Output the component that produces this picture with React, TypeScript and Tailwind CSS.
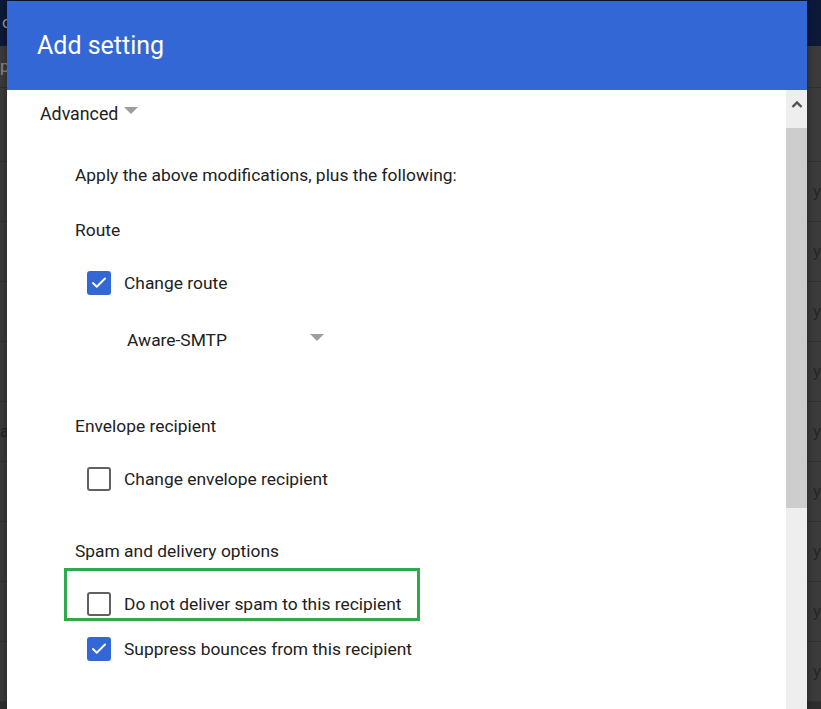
import { Check } from "lucide-react";

const font = { fontFamily: "Roboto, 'Noto Sans', Arial, sans-serif" };

function Caret({ className = "" }: { className?: string }) {
  return (
    <svg width="14" height="7" viewBox="0 0 14 7" className={className}>
      <path d="M0 0 L14 0 L7 7 Z" fill="#9e9e9e" />
    </svg>
  );
}

function Checkbox({ checked }: { checked?: boolean }) {
  if (checked) {
    return (
      <span className="flex h-[24px] w-[24px] shrink-0 items-center justify-center rounded-[3px] bg-[#3367d6]">
        <Check size={18} strokeWidth={2.5} color="#fff" />
      </span>
    );
  }
  return <span className="h-[24px] w-[24px] shrink-0 rounded-[3px] border-2 border-[#616161]" />;
}

function Option({ checked, label, className = "" }: { checked?: boolean; label: string; className?: string }) {
  return (
    <div className={`flex items-center gap-[13px] ${className}`}>
      <Checkbox checked={checked} />
      <span className="text-[17.4px] leading-[24px] text-[#212121]">{label}</span>
    </div>
  );
}

const rows = [0, 1, 2, 3, 4, 5, 6, 7, 8];

export default function App() {
  return (
    <div className="relative h-[709px] w-[821px] overflow-hidden bg-[#3b3b3b]" style={font}>
      {/* page behind the dialog */}
      <div className="flex h-[46px] items-center bg-[#0c1938] pl-[2px] text-[17px] text-[#9aa0aa]">o</div>
      <div className="flex h-[42px] items-center border-b border-[#2f2f2f] text-[17px] text-[#8a8a8a]">pa</div>
      <div className="h-[74px] border-b border-[#313131]" />
      <div className="flex flex-col">
        {rows.map((i) => (
          <div
            key={i}
            className="flex h-[60px] items-center justify-between border-b border-[#313131] text-[17px] text-[#262626]"
          >
            <span>{i === 4 ? "a" : ""}</span>
            <span className="pr-[0px]">y</span>
          </div>
        ))}
        <div className="h-[20px] bg-[#2e2e2e]" />
      </div>

      {/* dialog */}
      <div className="absolute left-[7px] top-[1px] bottom-0 flex w-[800px] flex-col bg-white shadow-[0_0_8px_rgba(0,0,0,0.4)]">
        <div className="flex h-[89px] shrink-0 items-center bg-[#3367d6] pl-[30px]">
          <h1 className="text-[25px] font-normal text-white">Add setting</h1>
        </div>
        <div className="flex flex-1 overflow-hidden">
          <div className="flex-1 pt-[12px]">
            <div className="flex items-center gap-[6px] pl-[33px]">
              <span className="text-[17.8px] leading-[24px] text-[#212121]">Advanced</span>
              <Caret className="-mt-[8px]" />
            </div>

            <div className="pl-[68px]">
              <p className="mt-[37px] text-[17.4px] leading-[24px] text-[#212121]">
                Apply the above modifications, plus the following:
              </p>

              <p className="mt-[31px] text-[17.4px] leading-[24px] text-[#212121]">Route</p>
              <Option className="mt-[29px] pl-[12px]" checked label="Change route" />
              <div className="mt-[33px] flex w-[249px] items-center justify-between pl-[52px]">
                <span className="text-[17.4px] leading-[24px] text-[#212121]">Aware-SMTP</span>
                <Caret className="-mt-[6px]" />
              </div>

              <p className="mt-[62px] text-[17.4px] leading-[24px] text-[#212121]">Envelope recipient</p>
              <Option className="mt-[29px] pl-[12px]" label="Change envelope recipient" />

              <p className="mt-[48px] text-[17.4px] leading-[24px] text-[#212121]">Spam and delivery options</p>
              <div className="-ml-[11px] mt-[5px] w-[356px] border-[3px] border-[#2eaa4c] pb-[2px] pl-[20px] pt-[21px]">
                <Option label="Do not deliver spam to this recipient" />
              </div>
              <Option className="mt-[16px] pl-[12px]" checked label="Suppress bounces from this recipient" />
            </div>
          </div>

          {/* scrollbar */}
          <div className="flex w-[21px] shrink-0 flex-col bg-[#eeeeee]">
            <div className="flex h-[27px] items-center justify-center">
              <svg width="12" height="8" viewBox="0 0 12 8">
                <path d="M1.5 7 L6 2.5 L10.5 7" stroke="#505050" strokeWidth="2.4" fill="none" />
              </svg>
            </div>
            <div className="mt-[11px] h-[380px] bg-[#cdcdcd]" />
          </div>
        </div>
      </div>
    </div>
  );
}
